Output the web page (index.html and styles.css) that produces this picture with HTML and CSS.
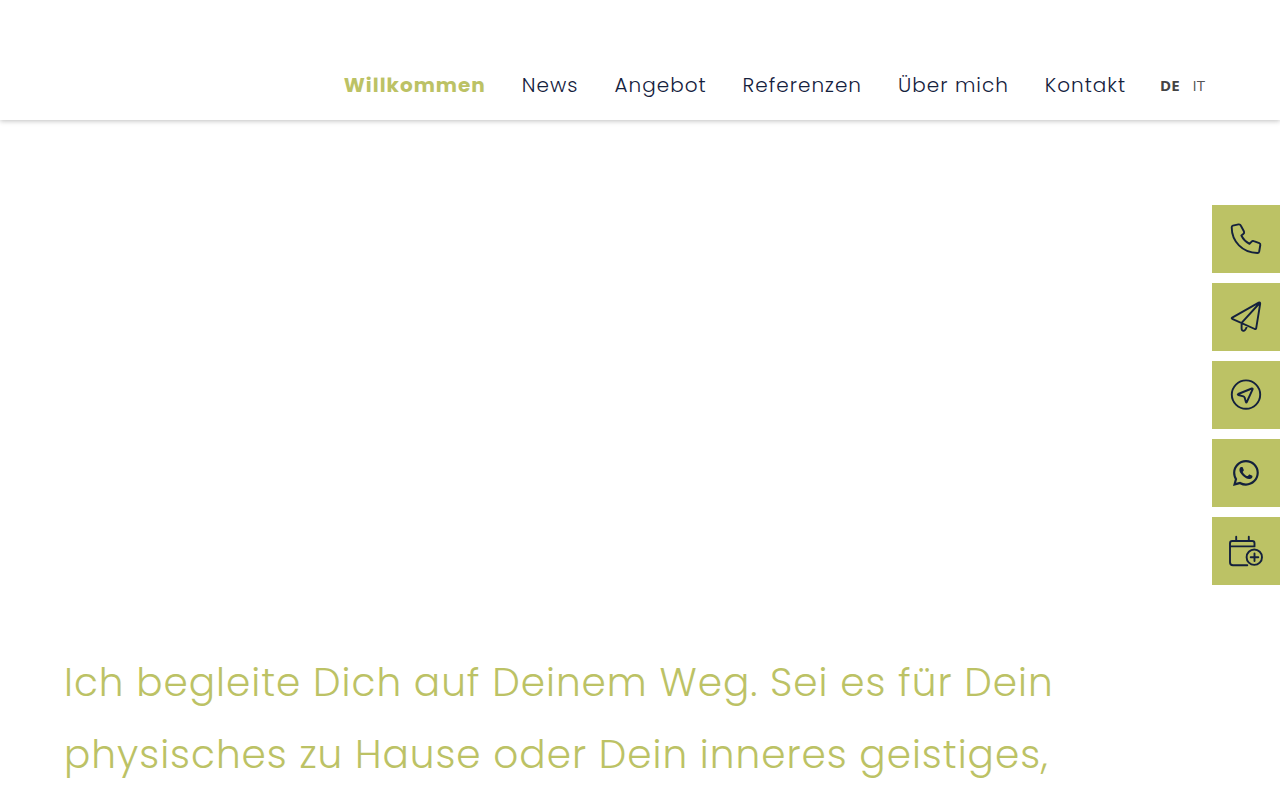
FILE: index.html
```html
<!DOCTYPE html>
<html lang="de">
<head>
<meta charset="utf-8">
<meta name="viewport" content="width=device-width, initial-scale=1">
<title>Willkommen</title>
<link rel="stylesheet" href="styles.css">
</head>
<body>
<header class="header">
  <nav class="nav" aria-label="Hauptmenü">
    <a class="nav-link active" href="#">Willkommen</a>
    <a class="nav-link" href="#">News</a>
    <a class="nav-link" href="#">Angebot</a>
    <a class="nav-link" href="#">Referenzen</a>
    <a class="nav-link" href="#">Über mich</a>
    <a class="nav-link" href="#">Kontakt</a>
  </nav>
  <nav class="languages" aria-label="Sprache">
    <a class="language current" href="#">DE</a>
    <a class="language" href="#">IT</a>
  </nav>
</header>
<main class="main">
  <p class="intro">Ich begleite Dich auf Deinem Weg. Sei es für Dein<br>physisches zu Hause oder Dein inneres geistiges,</p>
</main>
<aside class="contact-bar">
  <a class="contact-tile" href="#" aria-label="Anrufen">
    <svg class="icon" viewBox="0 0 68 68"><path d="M20.8 20.6 26.5 19.4Q28.2 19.1 28.9 20.7L32 26.5Q32.6 28 31.3 29L29.4 30.5Q32 36 37.5 38.8L39.6 36.6Q40.5 35.7 41.8 36.2L47.3 38.1Q48.6 38.6 48.3 40L47.2 46.5Q46.9 48 45.4 48C30.5 47.8 19.7 36.5 19.7 22.3Q19.7 20.9 20.8 20.6Z"/></svg>
  </a>
  <a class="contact-tile" href="#" aria-label="Nachricht senden">
    <svg class="icon" viewBox="0 0 68 68"><path d="M46.7 19.6 20.2 34.6Q19.2 35.2 20.2 35.8L42.8 46Q44 46.4 44.2 45.2L48.2 20.7Q48.2 18.9 46.7 19.6ZM47.7 20 29.6 39.8V45.5C29.6 49 33.6 49 35 42.6M47.5 19.8 45.5 22.5"/></svg>
  </a>
  <a class="contact-tile" href="#" aria-label="Anfahrt">
    <svg class="icon" viewBox="0 0 68 68"><circle cx="34" cy="33.6" r="14.2"/><path d="M39.8 27.5 26.2 33Q25.2 33.5 26.3 34L31.4 35.4Q32.4 35.7 32.6 36.6L33.9 41Q34.3 42.1 34.8 41L40.6 28.4Q41 27.1 39.8 27.5Z"/></svg>
  </a>
  <a class="contact-tile" href="#" aria-label="WhatsApp">
    <svg class="icon" viewBox="0 0 68 68"><path class="solid" transform="translate(21 21) scale(1.62)" d="M13.601 2.326A7.85 7.85 0 0 0 7.994 0C3.627 0 .068 3.558.064 7.926c0 1.399.366 2.76 1.057 3.965L0 16l4.204-1.102a7.9 7.9 0 0 0 3.79.965h.004c4.368 0 7.926-3.558 7.93-7.93A7.9 7.9 0 0 0 13.6 2.326zM7.994 14.521a6.6 6.6 0 0 1-3.356-.92l-.24-.144-2.494.654.666-2.433-.156-.251a6.56 6.56 0 0 1-1.007-3.505c0-3.626 2.957-6.584 6.591-6.584a6.56 6.56 0 0 1 4.66 1.931 6.56 6.56 0 0 1 1.928 4.66c-.004 3.639-2.961 6.592-6.592 6.592m3.615-4.934c-.197-.099-1.17-.578-1.353-.646-.182-.065-.315-.099-.445.099-.133.197-.513.646-.627.775-.114.133-.232.148-.43.05-.197-.1-.836-.308-1.592-.985-.59-.525-.985-1.175-1.103-1.372-.114-.198-.011-.304.088-.403.087-.088.197-.232.296-.346.1-.114.133-.198.198-.33.065-.134.034-.248-.015-.347-.05-.099-.445-1.076-.612-1.47-.16-.389-.323-.335-.445-.34-.114-.007-.247-.007-.38-.007a.73.73 0 0 0-.529.247c-.182.198-.691.677-.691 1.654s.71 1.916.81 2.049c.098.133 1.394 2.132 3.383 2.992.47.205.84.326 1.129.418.475.152.904.129 1.246.08.38-.058 1.171-.48 1.338-.943.164-.464.164-.86.114-.943-.049-.084-.182-.133-.38-.232"/></svg>
  </a>
  <a class="contact-tile" href="#" aria-label="Termin buchen">
    <svg class="icon" viewBox="0 0 68 68"><path d="M42.5 29.4H18V26.3Q18 24 20.3 24H40.2Q42.5 24 42.5 26.3ZM18 29V45.2Q18 48.2 21 48.2H35.3M24.2 19.8V24M36.8 19.8V24M42.5 36.4V44M38.7 40.2H46.3"/><circle cx="42.3" cy="40.2" r="7.7"/></svg>
  </a>
</aside>
</body>
</html>
```
FILE: styles.css
```css
* { box-sizing: border-box; }
body {
  margin: 0;
  background: #fff;
  color: #14213d;
  font-family: Poppins, Inter, "Liberation Sans", sans-serif;
  font-weight: 300;
  letter-spacing: 1px;
}
a { color: inherit; text-decoration: none; }
.header {
  display: flex;
  justify-content: flex-end;
  align-items: center;
  gap: 34px;
  min-height: 120px;
  padding: 50px 75px 0 64px;
  box-shadow: 0 1px 5px rgba(0, 0, 0, 0.25);
}
.nav { display: flex; gap: 36px; font-size: 20px; line-height: 30px; }
.active { color: #bcc265; font-weight: 700; }
.languages {
  display: flex;
  gap: 13px;
  color: #555;
  font-family: "Open Sans", sans-serif;
  font-size: 15px;
  font-weight: 400;
  letter-spacing: normal;
  line-height: 32px;
}
.current { color: #444; font-weight: 700; }
.main { padding: 527px 64px 0; }
.intro { margin: 0; color: #bcc265; font-size: 39px; line-height: 72px; }
.contact-bar {
  position: fixed;
  top: 205px;
  right: 0;
  display: flex;
  flex-direction: column;
  gap: 10px;
}
.contact-tile { width: 68px; height: 68px; background: #bcc265; }
.icon {
  display: block;
  width: 100%;
  height: 100%;
  fill: none;
  stroke: #14213d;
  stroke-width: 1.9;
  stroke-linecap: round;
  stroke-linejoin: round;
}
.solid { fill: #14213d; stroke: none; }
```
